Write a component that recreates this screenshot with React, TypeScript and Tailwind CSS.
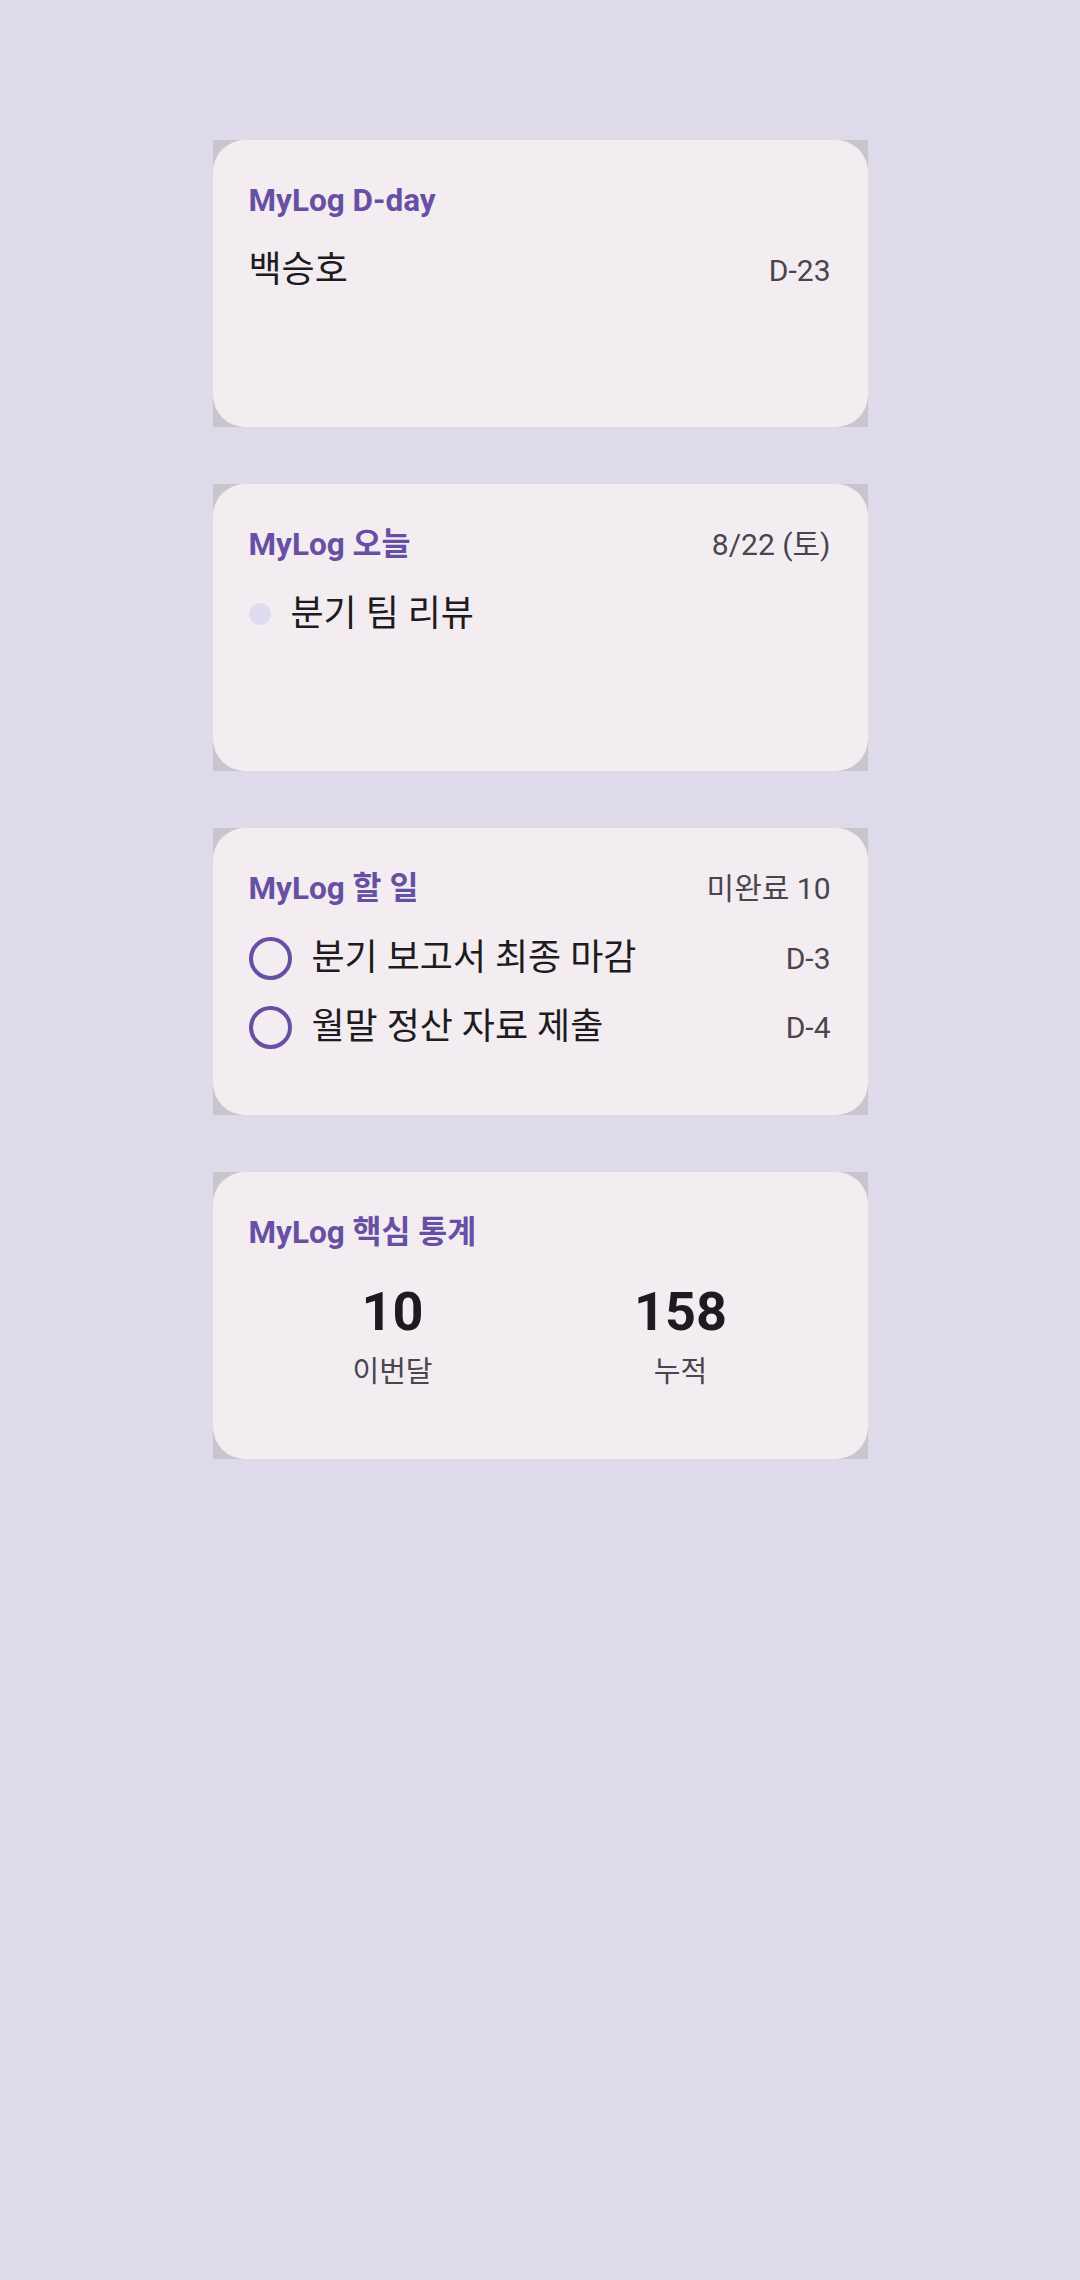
import React from "react";

const font = { fontFamily: "Roboto, 'Noto Sans CJK KR', sans-serif" };

function Card({ children }: { children: React.ReactNode }) {
  return (
    <div className="w-[655px] h-[287px] bg-[#c8c6cc]">
      <div className="h-full rounded-[32px] bg-[#f3edf1] pl-[36px] pr-[37px] pt-[41px]">{children}</div>
    </div>
  );
}

function Header({ title, right }: { title: string; right?: string }) {
  return (
    <div className="flex h-[40px] items-center justify-between">
      <span className="text-[31.5px] font-bold leading-[40px] text-[#6750a4]">{title}</span>
      {right && <span className="text-[30px] leading-[40px] text-[#49454f]">{right}</span>}
    </div>
  );
}

export default function App() {
  return (
    <div className="min-h-[2280px] w-[1080px] bg-[#dedaea] pt-[140px]" style={font}>
      <div className="flex flex-col items-center gap-[57px]">
        <Card>
          <Header title="MyLog D-day" />
          <div className="mt-[21px] flex h-[56px] items-center justify-between">
            <span className="text-[36px] text-[#1d1b20]">백승호</span>
            <span className="text-[30px] text-[#49454f]">D-23</span>
          </div>
        </Card>
        <Card>
          <Header title="MyLog 오늘" right="8/22 (토)" />
          <div className="mt-[21px] flex h-[56px] items-center gap-[20px]">
            <span className="h-[22px] w-[22px] rounded-full bg-[#dfdbef]" />
            <span className="text-[36px] text-[#1d1b20]">분기 팀 리뷰</span>
          </div>
        </Card>
        <Card>
          <Header title="MyLog 할 일" right="미완료 10" />
          <div className="mt-[21px] flex flex-col gap-[13px]">
            {[
              ["분기 보고서 최종 마감", "D-3"],
              ["월말 정산 자료 제출", "D-4"],
            ].map(([t, d]) => (
              <div key={t} className="flex h-[56px] items-center">
                <span className="h-[43px] w-[43px] shrink-0 rounded-full border-[4.5px] border-[#6750a4]" />
                <span className="ml-[20px] flex-1 text-[36px] text-[#1d1b20]">{t}</span>
                <span className="text-[30px] text-[#49454f]">{d}</span>
              </div>
            ))}
          </div>
        </Card>
        <Card>
          <Header title="MyLog 핵심 통계" />
          <div className="mt-[27px] mr-[6px] grid grid-cols-2">
            {[
              ["10", "이번달"],
              ["158", "누적"],
            ].map(([n, l]) => (
              <div key={l} className="flex flex-col items-center">
                <span className="text-[54px] font-bold leading-[64px] text-[#1d1b20]">{n}</span>
                <span className="mt-[12px] text-[29px] leading-[32px] text-[#49454f]">{l}</span>
              </div>
            ))}
          </div>
        </Card>
      </div>
    </div>
  );
}
